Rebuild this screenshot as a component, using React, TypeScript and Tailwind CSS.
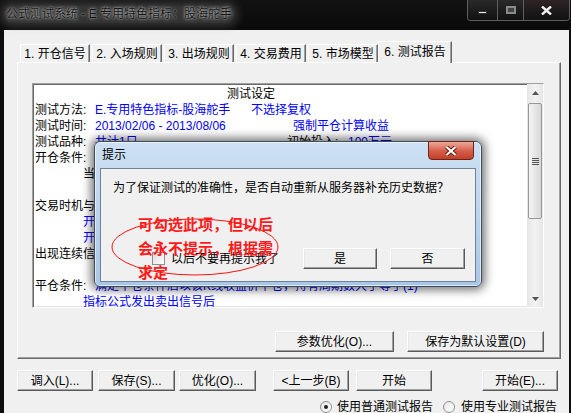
import React from "react";

const FONT = "font-['Liberation_Sans','Noto_Sans_CJK_SC',sans-serif]";

function WinButton({ children, className = "" }: { children: React.ReactNode; className?: string }) {
  return (
    <div
      className={`flex items-center justify-center h-[21px] bg-[#f0f0f0] border border-t-white border-l-white border-r-[#5a5a5a] border-b-[#5a5a5a] shadow-[inset_-1px_-1px_#a0a0a0,inset_1px_1px_#e8e8e8] text-[12px] leading-none text-black whitespace-nowrap ${className}`}
    >
      {children}
    </div>
  );
}

function Blue({ children, className = "" }: { children: React.ReactNode; className?: string }) {
  return <span className={`text-[#0000ff] ${className}`}>{children}</span>;
}

function Label({ children, w }: { children: React.ReactNode; w: string }) {
  return <span className={`inline-block ${w}`}>{children}</span>;
}

const tabs = ["1. 开仓信号", "2. 入场规则", "3. 出场规则", "4. 交易费用", "5. 市场模型"];

export default function App() {
  return (
    <div className={`relative w-[571px] h-[413px] overflow-hidden bg-[#0c0f12] ${FONT}`}>
      {/* Title bar */}
      <div className="h-[30px] flex justify-between items-start bg-gradient-to-b from-[#121212] to-[#0a0a0a]">
        <div className="ml-[4px] mt-[6px] px-[2px] text-[12px] leading-[17px] text-[#151515] rounded-[8px] bg-[rgba(150,150,150,0.28)] shadow-[0_0_8px_4px_rgba(150,150,150,0.28)] [text-shadow:0_0_2px_rgba(225,225,225,0.9),0_0_5px_rgba(200,200,200,0.7)] whitespace-nowrap">
          公式测试系统 - E.专用特色指标：股海舵手
        </div>
        <div className="mr-[1px] flex h-[21px] border border-t-0 border-[#5e5e5e] rounded-b-[4px] overflow-hidden">
          <div className="w-[29px] flex items-end justify-center pb-[6px] bg-gradient-to-b from-[#2a2a2a] to-[#111]">
            <div className="w-[9px] h-[3px] bg-[#e8e8e8] border border-[#333]" />
          </div>
          <div className="w-[26px] flex items-center justify-center border-l border-[#5e5e5e] bg-gradient-to-b from-[#2a2a2a] to-[#111]">
            <div className="w-[10px] h-[8px] border-2 border-[#8a8a8a] bg-[#444]" />
          </div>
          <div className="w-[46px] flex items-center justify-center border-l border-[#5e5e5e] bg-gradient-to-b from-[#2e2426] to-[#121212]">
            <svg width="11" height="9" viewBox="0 0 11 9">
              <path d="M1 0.5 L10 8.5 M10 0.5 L1 8.5" stroke="#f2f2f2" strokeWidth="2.4" />
            </svg>
          </div>
        </div>
      </div>

      {/* Client area */}
      <div className="ml-[4px] w-[565px] h-[383px] bg-[#f0f0f0] text-[12px] text-black">
        {/* Tabs */}
        <div className="pt-[11px] pl-[16px] flex items-end h-[32px] relative z-10">
          {tabs.map((t) => (
            <div
              key={t}
              className="w-[70px] h-[18px] mr-[2px] flex items-center justify-center border border-b-0 border-t-white border-l-white border-r-[#6a6a6a] shadow-[inset_-1px_0_#a0a0a0] bg-[#f0f0f0] leading-none whitespace-pre"
            >
              {t}
            </div>
          ))}
          <div className="ml-[-2px] w-[74px] h-[22px] mb-[-1px] flex items-center justify-center border border-b-0 border-t-white border-l-white border-r-[#6a6a6a] shadow-[inset_-1px_0_#a0a0a0] bg-[#f0f0f0] leading-none pb-[2px] whitespace-pre">
            6. 测试报告
          </div>
        </div>

        {/* Panel */}
        <div className="ml-[13px] w-[544px] h-[297px] border border-t-white border-l-white border-r-[#6a6a6a] border-b-[#6a6a6a] shadow-[inset_-1px_-1px_#a0a0a0] pl-[14px] pt-[20px]">
          {/* Text box */}
          <div className="w-[512px] h-[225px] flex border border-t-[#a0a0a0] border-l-[#a0a0a0] border-r-white border-b-white shadow-[inset_1px_1px_#696969,inset_-1px_-1px_#e3e3e3] bg-white">
            <div className="flex-1 overflow-hidden pl-[2px] pt-[2px] leading-[16px] whitespace-nowrap">
              <div className="h-[16px] pl-[192px]">测试设定</div>
              <div className="h-[16px]">
                <Label w="w-[60px]">测试方法:</Label>
                <Blue className="inline-block w-[156px]">E.专用特色指标-股海舵手</Blue>
                <Blue>不选择复权</Blue>
              </div>
              <div className="h-[16px]">
                <Label w="w-[60px]">测试时间:</Label>
                <Blue className="inline-block w-[198px]">2013/02/06 - 2013/08/06</Blue>
                <Blue>强制平仓计算收益</Blue>
              </div>
              <div className="h-[16px]">
                <Label w="w-[60px]">测试品种:</Label>
                <Blue className="inline-block w-[192px]">共计1只</Blue>
                <Label w="w-[61px]">初始投入:</Label>
                <Blue>100万元</Blue>
              </div>
              <div className="h-[16px]">
                <Label w="w-[60px]">开仓条件:</Label>
                <Blue>指标公式发出买入信号</Blue>
              </div>
              <div className="h-[16px] pl-[48px]">当前价位满足开仓条件时开仓</div>
              <div className="h-[16px]" />
              <div className="h-[16px]">交易时机与信号的关系:</div>
              <div className="h-[16px] pl-[48px]">
                <Blue>开仓信号出现后下一根K线开盘价开仓</Blue>
              </div>
              <div className="h-[16px] pl-[48px]">
                <Blue>开仓信号出现后当前K线收盘价开仓</Blue>
              </div>
              <div className="h-[16px]">出现连续信号时的处理方式:</div>
              <div className="h-[16px]" />
              <div className="h-[16px]">
                <Label w="w-[60px]">平仓条件:</Label>
                <Blue>满足平仓条件后以该K线收盘价平仓，持有周期数大于等于(1)</Blue>
              </div>
              <div className="h-[16px] pl-[48px]">
                <Blue>指标公式发出卖出信号后</Blue>
              </div>
            </div>
            {/* Scrollbar */}
            <div className="w-[16px] h-full flex flex-col bg-gradient-to-r from-[#e6e6e6] via-[#f2f2f2] to-[#e6e6e6]">
              <div className="h-[17px] flex items-center justify-center">
                <svg width="7" height="4" viewBox="0 0 7 4">
                  <path d="M0 4 L3.5 0 L7 4 Z" fill="#555" />
                </svg>
              </div>
              <div className="mt-[2px] h-[116px] mx-[1px] rounded-[2px] border border-[#979797] bg-gradient-to-r from-[#f4f4f4] to-[#d8d8d8] flex items-center justify-center">
                <div className="flex flex-col gap-[1px]">
                  <div className="w-[7px] h-[1px] bg-[#555]" />
                  <div className="w-[7px] h-[1px] bg-[#555]" />
                  <div className="w-[7px] h-[1px] bg-[#555]" />
                  <div className="w-[7px] h-[1px] bg-[#555]" />
                </div>
              </div>
              <div className="flex-1" />
              <div className="h-[17px] flex items-center justify-center">
                <svg width="7" height="4" viewBox="0 0 7 4">
                  <path d="M0 0 L3.5 4 L7 0 Z" fill="#555" />
                </svg>
              </div>
            </div>
          </div>

          {/* Panel buttons */}
          <div className="mt-[23px] flex">
            <WinButton className="ml-[243px] w-[119px]">参数优化(O)...</WinButton>
            <WinButton className="ml-[13px] w-[137px]">保存为默认设置(D)</WinButton>
          </div>
        </div>

        {/* Bottom buttons */}
        <div className="mt-[11px] ml-[13px] flex">
          <WinButton className="w-[76px]">调入(L)...</WinButton>
          <WinButton className="ml-[5px] w-[77px]">保存(S)...</WinButton>
          <WinButton className="ml-[4px] w-[77px]">优化(O)...</WinButton>
          <WinButton className="ml-[17px] w-[76px]">&lt;上一步(B)</WinButton>
          <WinButton className="ml-[7px] w-[76px]">开始</WinButton>
          <WinButton className="ml-[50px] w-[76px]">开始(E)...</WinButton>
        </div>

        {/* Radios */}
        <div className="mt-[8px] ml-[316px] flex items-center h-[16px] leading-[16px]">
          <div className="w-[12px] h-[12px] rounded-full border border-[#8f8f8f] bg-gradient-to-br from-[#e6e6e6] to-white flex items-center justify-center">
            <div className="w-[4px] h-[4px] rounded-full bg-[#222]" />
          </div>
          <span className="ml-[5px]">使用普通测试报告</span>
          <div className="ml-[10px] w-[12px] h-[12px] rounded-full border border-[#8f8f8f] bg-gradient-to-br from-[#e6e6e6] to-white" />
          <span className="ml-[6px]">使用专业测试报告</span>
        </div>
      </div>

      {/* Dialog */}
      <div className="absolute left-[94px] top-[141px] w-[388px] h-[146px] rounded-[6px] border border-[#3c4d60] bg-gradient-to-b from-[#cde0f4] via-[#bcd4ed] to-[#a9c6e6] shadow-[0_0_10px_3px_rgba(0,0,0,0.55),inset_0_0_0_1px_rgba(255,255,255,0.6)] flex flex-col">
        <div className="h-[26px] pl-[7px] flex items-center text-[12px] text-black">提示</div>
        <div className="mx-[5px] h-[114px] border border-[#6f8398] bg-[#f0f0f0] text-[12px] text-black flex flex-col">
          <div className="pl-[12px] pt-[11px] h-[27px] leading-[16px] whitespace-nowrap">
            为了保证测试的准确性，是否自动重新从服务器补充历史数据？
          </div>
          <div className="mt-[52px] h-[21px] flex items-center">
            <div className="ml-[51px] w-[13px] h-[13px] border border-[#8f8f8f] bg-gradient-to-br from-[#dcdcdc] to-white" />
            <span className="ml-[6px] w-[108px] whitespace-nowrap">以后不要再提示我了</span>
            <WinButton className="ml-[24px] w-[74px]">是</WinButton>
            <WinButton className="ml-[13px] w-[75px]">否</WinButton>
          </div>
        </div>
        {/* red close */}
        <div className="absolute top-[-1px] right-[7px] w-[46px] h-[19px] rounded-b-[4px] border border-[#6e2218] bg-gradient-to-b from-[#eaa99c] via-[#d7614c] to-[#c23d27] flex items-center justify-center">
          <svg width="12" height="10" viewBox="0 0 12 10">
            <path d="M1.5 1 L10.5 9 M10.5 1 L1.5 9" stroke="#5a1a10" strokeWidth="4" />
            <path d="M1.5 1 L10.5 9 M10.5 1 L1.5 9" stroke="#ffffff" strokeWidth="2.2" />
          </svg>
        </div>
      </div>

      {/* Red annotation */}
      <svg className="absolute left-[108px] top-[216px]" width="176" height="64" viewBox="0 0 176 64">
        <ellipse cx="87" cy="31" rx="83" ry="28" fill="none" stroke="#ff1010" strokeWidth="1" />
      </svg>
      <div className="absolute left-[138px] top-[213px] text-[15px] leading-[24px] font-bold text-[#ff1a1a] whitespace-nowrap">
        <div>可勾选此项，但以后</div>
        <div>会永不提示，根据需</div>
        <div>求定</div>
      </div>
    </div>
  );
}
